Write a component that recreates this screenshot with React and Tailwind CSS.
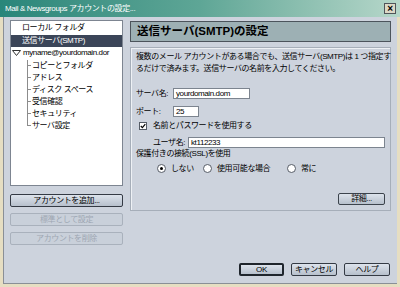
const font = { fontFamily: '"Liberation Sans", "Noto Sans CJK JP", sans-serif' };

function TreeChild({ label, last }) {
  return (
    <div className="flex h-[12px] items-stretch">
      <div className="flex w-[4px] flex-col">
        <div className="h-[6px] border-l border-b border-[#8c8c8c]" />
        <div className={last ? "flex-1" : "flex-1 border-l border-[#8c8c8c]"} />
      </div>
      <span className="flex items-center pl-[1px] leading-none">{label}</span>
    </div>
  );
}

function SideButton({ children, disabled }) {
  return (
    <div
      className={
        disabled
          ? "flex h-[13px] items-center justify-center rounded-[2px] border border-[#a9b1bc] bg-[#c9d0da] text-[#9ea7b3]"
          : "flex h-[13px] items-center justify-center rounded-[2px] border border-[#343a44] bg-gradient-to-b from-[#dde3ec] to-[#b7c0cc] text-black"
      }
    >
      {children}
    </div>
  );
}

function Radio({ checked }) {
  return (
    <div className="flex h-[9px] w-[9px] items-center justify-center rounded-full border border-[#555c66] bg-white">
      {checked && <div className="h-[3px] w-[3px] rounded-full bg-black" />}
    </div>
  );
}

export default function App() {
  const children = ["コピーとフォルダ", "アドレス", "ディスク スペース", "受信確認", "セキュリティ", "サーバ設定"];

  return (
    <div className="flex h-[287px] w-[400px] flex-col bg-[#e6dec2] text-[8px] text-black tracking-[-0.4px]" style={font}>
      {/* Title bar */}
      <div className="flex h-[17px] items-center bg-gradient-to-r from-[#28867a] via-[#5ea696] to-[#b6d7ca] pl-[5px] pr-[4px]">
        <span className="text-white leading-none">Mail &amp; Newsgroups アカウントの設定...</span>
        <div className="ml-auto flex h-[11px] w-[12px] items-center justify-center border border-[#50545a] bg-[#dcd8c6] text-[10px] font-bold leading-none">
          ×
        </div>
      </div>

      {/* Body */}
      <div className="mx-[3px] mb-[3px] flex flex-1 flex-col border-l border-b border-[#8a8f96] bg-[#cdd3dd] pl-[6px] pr-[6px] pt-[3px] pb-[7px]">
        <div className="flex gap-[7px]">
          {/* Left column */}
          <div className="flex w-[113px] flex-col">
            <div className="h-[166px] border border-[#7d8591] bg-white pt-[1px]">
              <div className="flex h-[12px] items-center pl-[11px]">ローカル フォルダ</div>
              <div className="mt-[1px] flex h-[12px] items-center bg-[#3b4558] pl-[11px] text-white">送信サーバ(SMTP)</div>
              <div className="flex h-[12px] items-center">
                <svg width="9" height="6" viewBox="0 0 9 6" className="ml-[1px] mr-[2px]">
                  <path d="M0.5 0.5 L8.5 0.5 L4.5 5.5 Z" fill="none" stroke="#333" strokeWidth="1" />
                </svg>
                <span>myname@yourdomain.dor</span>
              </div>
              <div className="mt-[1px] pl-[16px]">
                {children.map((c, i) => (
                  <TreeChild key={c} label={c} last={i === children.length - 1} />
                ))}
              </div>
            </div>
            <div className="mt-[8px] flex flex-col gap-[6px]">
              <SideButton>アカウントを追加...</SideButton>
              <SideButton disabled>標準として設定</SideButton>
              <SideButton disabled>アカウントを削除</SideButton>
            </div>
          </div>

          {/* Right column */}
          <div className="flex w-[261px] flex-col">
            <div className="mt-[1px] flex h-[21px] items-center border border-[#4c545c] bg-[#9db0b4] pl-[6px] text-[11.5px] font-bold tracking-normal">
              送信サーバ(SMTP)の設定
            </div>
            <div className="mt-[5px] flex h-[164px] flex-col border border-[#a6aeb9] pl-[5px] pr-[5px] pt-[3px] pb-[5px] shadow-[inset_1px_1px_0_#eef1f5]">
              <div className="whitespace-nowrap leading-[12px]">
                複数のメール アカウントがある場合でも、送信サーバ(SMTP)は 1 つ指定す
                <br />
                るだけで済みます。送信サーバの名前を入力してください。
              </div>

              <div className="mt-[13px] flex h-[11px] items-center">
                <span className="w-[37px]">サーバ名:</span>
                <div className="flex h-[11px] w-[77px] items-center border border-[#7c848f] bg-white pl-[2px]">yourdomain.dom</div>
              </div>
              <div className="mt-[7px] flex h-[11px] items-center">
                <span className="w-[37px]">ポート:</span>
                <div className="flex h-[11px] w-[26px] items-center border border-[#7c848f] bg-white pl-[2px]">25</div>
              </div>
              <div className="mt-[4px] flex h-[10px] items-center pl-[3px]">
                <div className="flex h-[8px] w-[8px] items-center justify-center border border-[#555c66] bg-white">
                  <svg width="6" height="6" viewBox="0 0 6 6">
                    <path d="M0.8 3 L2.4 4.6 L5.3 1.2" fill="none" stroke="#000" strokeWidth="1.2" />
                  </svg>
                </div>
                <span className="ml-[6px]">名前とパスワードを使用する</span>
              </div>
              <div className="mt-[6px] flex h-[11px] items-center pl-[17px]">
                <span className="w-[35px]">ユーザ名:</span>
                <div className="flex h-[11px] flex-1 items-center border border-[#7c848f] bg-white pl-[2px]">kt112233</div>
              </div>
              <div className="flex h-[12px] items-center">保護付きの接続(SSL)を使用</div>
              <div className="mt-[4px] flex h-[9px] items-center pl-[21px]">
                <div className="flex w-[46px] items-center gap-[5px]">
                  <Radio checked />
                  <span>しない</span>
                </div>
                <div className="flex w-[84px] items-center gap-[5px]">
                  <Radio />
                  <span>使用可能な場合</span>
                </div>
                <div className="flex items-center gap-[5px]">
                  <Radio />
                  <span>常に</span>
                </div>
              </div>
              <div className="mt-auto flex justify-end">
                <div className="flex h-[12px] w-[47px] items-center justify-center rounded-[2px] border border-[#3c434c] bg-gradient-to-b from-[#dde3ec] to-[#b7c0cc]">
                  詳細...
                </div>
              </div>
            </div>
          </div>
        </div>

        {/* Bottom buttons */}
        <div className="mt-auto flex justify-end gap-[7px] pr-[1px]">
          <div className="flex h-[13px] w-[45px] items-center justify-center rounded-[2px] border-2 border-[#1f252c] bg-gradient-to-b from-[#dde3ec] to-[#b7c0cc]">OK</div>
          <div className="flex h-[13px] w-[46px] items-center justify-center rounded-[2px] border border-[#343a44] bg-gradient-to-b from-[#dde3ec] to-[#b7c0cc]">キャンセル</div>
          <div className="flex h-[13px] w-[46px] items-center justify-center rounded-[2px] border border-[#343a44] bg-gradient-to-b from-[#dde3ec] to-[#b7c0cc]">ヘルプ</div>
        </div>
      </div>
    </div>
  );
}
